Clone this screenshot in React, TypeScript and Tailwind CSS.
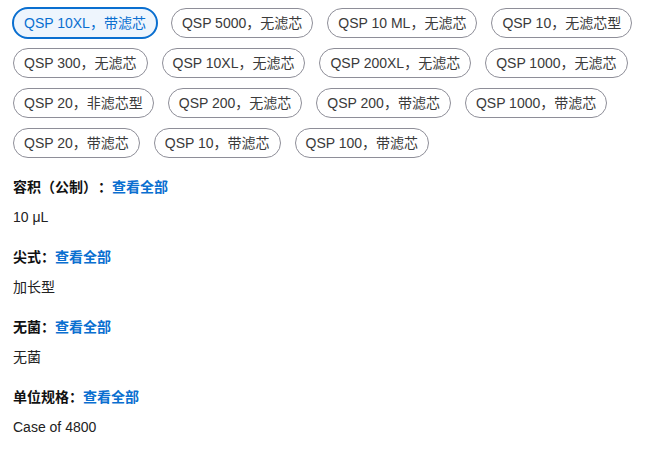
const options = [
  "QSP 10XL，带滤芯",
  "QSP 5000，无滤芯",
  "QSP 10 ML，无滤芯",
  "QSP 10，无滤芯型",
  "QSP 300，无滤芯",
  "QSP 10XL，无滤芯",
  "QSP 200XL，无滤芯",
  "QSP 1000，无滤芯",
  "QSP 20，非滤芯型",
  "QSP 200，无滤芯",
  "QSP 200，带滤芯",
  "QSP 1000，带滤芯",
  "QSP 20，带滤芯",
  "QSP 10，带滤芯",
  "QSP 100，带滤芯",
];

const specs = [
  { label: "容积（公制）", wide: true, value: "10 μL" },
  { label: "尖式", wide: false, value: "加长型" },
  { label: "无菌", wide: false, value: "无菌" },
  { label: "单位规格", wide: false, value: "Case of 4800" },
];

function Chip({ text, selected }: { text: string; selected: boolean }) {
  return (
    <div
      className={
        selected
          ? "m-[-1px] flex h-[32px] items-center rounded-full border-2 border-[#0a6fd0] bg-[#eef5fd] px-[10px] text-[#0a6fd0]"
          : "flex h-[30px] items-center rounded-full border border-[#8e8e98] bg-white px-[10px] text-[#3a3a3a]"
      }
    >
      {text}
    </div>
  );
}

export default function App() {
  return (
    <div
      className="h-[466px] w-[658px] bg-white pl-[13px] pt-[8px] text-[14px]"
      style={{ fontFamily: '"Liberation Sans", "Noto Sans CJK SC", sans-serif' }}
    >
      <div className="flex flex-wrap gap-x-[14px] gap-y-[10px] pr-[10px]">
        {options.map((o, i) => (
          <Chip key={o} text={o} selected={i === 0} />
        ))}
      </div>
      <div className="mt-[14px] flex flex-col gap-[10px]">
        {specs.map((s) => (
          <div key={s.label}>
            <div className="flex h-[30px] items-center font-bold text-[#111]">
              <span>{s.label}</span>
              <span className={s.wide ? "ml-[1px]" : ""}>：</span>
              <span className="text-[#0a6fd0]">查看全部</span>
            </div>
            <div className="flex h-[30px] items-center text-[#222]">{s.value}</div>
          </div>
        ))}
      </div>
    </div>
  );
}
